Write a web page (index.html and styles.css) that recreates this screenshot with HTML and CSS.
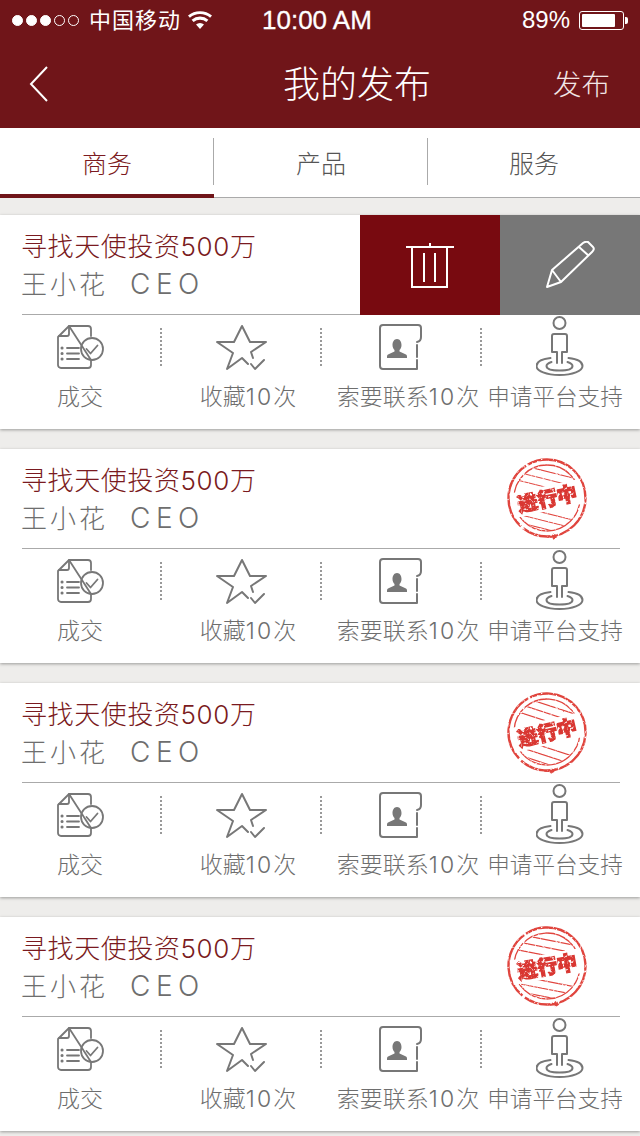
FILE: index.html
```html
<!DOCTYPE html>
<html lang="zh">
<head>
<meta charset="utf-8">
<title>我的发布</title>
<link rel="stylesheet" href="styles.css">
</head>
<body>
<svg class="defs" width="0" height="0">
  <defs>
    <filter id="rough" x="-10%" y="-10%" width="120%" height="120%">
      <feTurbulence type="fractalNoise" baseFrequency="0.4" numOctaves="2" seed="4" result="n"/>
      <feDisplacementMap in="SourceGraphic" in2="n" scale="1.500" result="d"/>
      <feColorMatrix in="n" type="matrix" values="0 0 0 0 0  0 0 0 0 0  0 0 0 0 0  0 0 0 -5 3.900" result="m"/>
      <feComposite in="d" in2="m" operator="in"/>
    </filter>
    <clipPath id="stampClip"><circle cx="42" cy="42" r="32"/></clipPath>
    <g id="stampBase">
      <circle cx="42" cy="42" r="38.500" fill="none" stroke-width="2.400" stroke-dasharray="86 3 70 2 82 4"/>
      <circle cx="42" cy="42" r="33" fill="none" stroke-width="1.300"/>
      <g clip-path="url(#stampClip)" stroke-width="1.200">
        <path d="M0 5 L84 26 M0 13 L84 34 M0 21 L84 42 M0 47 L84 68 M0 55 L84 76 M0 63 L84 84 M0 71 L84 92"/>
      </g>
      <path d="M42 81 h9 m-3 -3 l3 3 l-3 2" fill="none" stroke-width="1.600"/>
    </g>
    <g id="iDeal" fill="none" stroke="#777" stroke-width="1.800" stroke-linecap="round" stroke-linejoin="round">
      <path d="M13 11 H32 a3 3 0 0 1 3 3 V21 M35 45 V50 a3 3 0 0 1 -3 3 H5 a3 3 0 0 1 -3 -3 V22 L13 11 Z"/>
      <path d="M13 11 V19 a2 2 0 0 1 -2 2 H3"/>
      <circle cx="36" cy="34" r="11"/>
      <path d="M30.500 34 l4 4.500 l7 -8"/>
      <path d="M11 33 H23 M11 38.500 H23 M11 44 H23"/>
      <path d="M6 33 h.1 M6 38.500 h.1 M6 44 h.1" stroke-width="3"/>
    </g>
    <path id="iStar" d="M32 49 L26 43 L11 54 L17 38 L1 27 L18 27 L26 11 L34 27 L50 27 L35 37 L37 43 M35 49 L39 54 L48 45" fill="none" stroke="#777" stroke-width="2" stroke-linecap="round" stroke-linejoin="round"/>
    <g id="iContact">
      <path d="M38 54 H4 a3 3 0 0 1 -3 -3 V13 a3 3 0 0 1 3 -3 H39 a3 3 0 0 1 3 3 V22 a5 5 0 0 1 -4 5 M38 30 V42 M38 45 V54" fill="none" stroke="#777" stroke-width="2" stroke-linecap="round"/>
      <path d="M18 24 c3 0 4.500 3 4.500 6 c0 2.500 -1 4 -2 5 v1.500 l6.500 3 q1 .5 1 2 v1.500 H8 v-1.500 q0 -1.500 1 -2 l6.500 -3 v-1.500 c-1 -1 -2 -2.500 -2 -5 c0 -3 1.500 -6 4.500 -6 Z" fill="#777"/>
    </g>
    <g id="iSupport" fill="none" stroke="#777" stroke-width="2" stroke-linecap="round" stroke-linejoin="round">
      <circle cx="25" cy="8" r="6"/>
      <path d="M22.500 48 V37 H17.500 V21 a2 2 0 0 1 2 -2 H30.500 a2 2 0 0 1 2 2 V37 H27.500 V48"/>
      <path d="M16 43 C7 44 2 47 2 51 C2 56 12 60 25 60 C38 60 48 56 48 51 C48 47 43 44 34 43"/>
      <path d="M17 47 C14 48 12 49.500 12 51 C12 54 18 55.500 25 55.500 C32 55.500 38 54 38 51 C38 49.500 36 48 33 47"/>
    </g>
  </defs>
</svg>

<header class="top">
  <div class="status">
    <div class="signal"><i class="on"></i><i class="on"></i><i class="on"></i><i></i><i></i></div>
    <span class="carrier">中国移动</span>
    <svg class="wifi" viewBox="0 0 24 18" width="24" height="18"><path d="M12 18 L8 13.500 a6 6 0 0 1 8 0 Z M5.600 11 L3.600 8.700 a13 13 0 0 1 16.800 0 L18.400 11 a10 10 0 0 0 -12.800 0 Z M1.900 6.700 L0 4.600 a18.500 18.500 0 0 1 24 0 L22.100 6.700 a15.600 15.600 0 0 0 -20.200 0 Z"/></svg>
    <span class="time">10:00 AM</span>
    <span class="pct">89%</span>
    <div class="battery"><b></b></div>
    <div class="nub"></div>
  </div>
  <nav class="nav">
    <svg class="back" viewBox="0 0 20 36" width="20" height="36"><path d="M18 1 L2 18 L18 35" fill="none" stroke="#fff" stroke-width="2"/></svg>
    <h1 class="page-title">我的发布</h1>
    <span class="publish">发布</span>
  </nav>
</header>

<div class="tabs">
  <div class="tab active">商务</div>
  <div class="tab">产品</div>
  <div class="tab">服务</div>
</div>

<main class="list">
  <article class="card">
    <div class="head">
      <div class="title">寻找天使投资500万</div>
      <div class="person"><span>王小花</span><span class="role">CEO</span></div>
    </div>
    <div class="actions">
      <div class="act"><svg class="ic" viewBox="0 0 48 61" width="48" height="61"><use href="#iDeal"/></svg><span class="lbl">成交</span></div>
      <i class="sep"></i>
      <div class="act"><svg class="ic" viewBox="0 0 51 61" width="51" height="61"><use href="#iStar"/></svg><span class="lbl shift-r">收藏<span class="num">10</span>次</span></div>
      <i class="sep"></i>
      <div class="act"><svg class="ic" viewBox="0 0 44 61" width="44" height="61"><use href="#iContact"/></svg><span class="lbl shift-r">索要联系<span class="num">10</span>次</span></div>
      <i class="sep"></i>
      <div class="act"><svg class="ic" viewBox="1.500 0 50 61" width="50" height="61"><use href="#iSupport"/></svg><span class="lbl shift-l">申请平台支持</span></div>
    </div>
    <div class="swipe">
      <button class="sw del" type="button"><svg viewBox="0 0 50 48" width="50" height="48"><path d="M1 6 H49 M25 2 V6 M7 6 V46 H42 V6 M19 12 V41 M30 12 V41" fill="none" stroke="#fff" stroke-width="2"/></svg></button>
      <button class="sw edit" type="button"><svg viewBox="0 0 50 48" width="50" height="48"><path d="M2 46 L7 29 L38 2 Q41 0 43 1 L48 6 Q50 8 47 11 L16 41 Z M7 29 L16 41 M34 6 L44 15" fill="none" stroke="#fff" stroke-width="2" stroke-linejoin="round"/></svg></button>
    </div>
  </article>

  <article class="card">
    <div class="head">
      <div class="title">寻找天使投资500万</div>
      <div class="person"><span>王小花</span><span class="role">CEO</span></div>
    </div>
    <div class="actions">
      <div class="act"><svg class="ic" viewBox="0 0 48 61" width="48" height="61"><use href="#iDeal"/></svg><span class="lbl">成交</span></div>
      <i class="sep"></i>
      <div class="act"><svg class="ic" viewBox="0 0 51 61" width="51" height="61"><use href="#iStar"/></svg><span class="lbl shift-r">收藏<span class="num">10</span>次</span></div>
      <i class="sep"></i>
      <div class="act"><svg class="ic" viewBox="0 0 44 61" width="44" height="61"><use href="#iContact"/></svg><span class="lbl shift-r">索要联系<span class="num">10</span>次</span></div>
      <i class="sep"></i>
      <div class="act"><svg class="ic" viewBox="1.500 0 50 61" width="50" height="61"><use href="#iSupport"/></svg><span class="lbl shift-l">申请平台支持</span></div>
    </div>
    <svg class="stamp" viewBox="0 0 84 84" width="84" height="84"><g class="stamp-ink" filter="url(#rough)"><use href="#stampBase"/><g transform="rotate(-12 42 42)"><rect x="6" y="30" width="72" height="25" class="stamp-band"/><text x="42" y="50" text-anchor="middle" class="stamp-text">进行中</text></g></g></svg>
  </article>

  <article class="card">
    <div class="head">
      <div class="title">寻找天使投资500万</div>
      <div class="person"><span>王小花</span><span class="role">CEO</span></div>
    </div>
    <div class="actions">
      <div class="act"><svg class="ic" viewBox="0 0 48 61" width="48" height="61"><use href="#iDeal"/></svg><span class="lbl">成交</span></div>
      <i class="sep"></i>
      <div class="act"><svg class="ic" viewBox="0 0 51 61" width="51" height="61"><use href="#iStar"/></svg><span class="lbl shift-r">收藏<span class="num">10</span>次</span></div>
      <i class="sep"></i>
      <div class="act"><svg class="ic" viewBox="0 0 44 61" width="44" height="61"><use href="#iContact"/></svg><span class="lbl shift-r">索要联系<span class="num">10</span>次</span></div>
      <i class="sep"></i>
      <div class="act"><svg class="ic" viewBox="1.500 0 50 61" width="50" height="61"><use href="#iSupport"/></svg><span class="lbl shift-l">申请平台支持</span></div>
    </div>
    <svg class="stamp" viewBox="0 0 84 84" width="84" height="84"><g class="stamp-ink" filter="url(#rough)"><use href="#stampBase" transform="rotate(4 42 42)"/><g transform="rotate(-13 42 42)"><rect x="6" y="30" width="72" height="25" class="stamp-band"/><text x="42" y="50" text-anchor="middle" class="stamp-text">进行中</text></g></g></svg>
  </article>

  <article class="card">
    <div class="head">
      <div class="title">寻找天使投资500万</div>
      <div class="person"><span>王小花</span><span class="role">CEO</span></div>
    </div>
    <div class="actions">
      <div class="act"><svg class="ic" viewBox="0 0 48 61" width="48" height="61"><use href="#iDeal"/></svg><span class="lbl">成交</span></div>
      <i class="sep"></i>
      <div class="act"><svg class="ic" viewBox="0 0 51 61" width="51" height="61"><use href="#iStar"/></svg><span class="lbl shift-r">收藏<span class="num">10</span>次</span></div>
      <i class="sep"></i>
      <div class="act"><svg class="ic" viewBox="0 0 44 61" width="44" height="61"><use href="#iContact"/></svg><span class="lbl shift-r">索要联系<span class="num">10</span>次</span></div>
      <i class="sep"></i>
      <div class="act"><svg class="ic" viewBox="1.500 0 50 61" width="50" height="61"><use href="#iSupport"/></svg><span class="lbl shift-l">申请平台支持</span></div>
    </div>
    <svg class="stamp" viewBox="0 0 84 84" width="84" height="84"><g class="stamp-ink" filter="url(#rough)"><use href="#stampBase" transform="rotate(-3 42 42)"/><g transform="rotate(-10 42 42)"><rect x="6" y="30" width="72" height="25" class="stamp-band"/><text x="42" y="50" text-anchor="middle" class="stamp-text">进行中</text></g></g></svg>
  </article>
</main>
</body>
</html>
```
FILE: styles.css
```css
* { box-sizing: border-box; }
html, body { margin: 0; padding: 0; }
body {
  width: 640px;
  height: 1136px;
  overflow: hidden;
  background: #eeedeb;
  font-family: "Inter", "Noto Sans CJK SC", sans-serif;
  font-weight: 300;
  color: #666;
}
.defs { display: block; height: 0; }

.top { height: 128px; background: #701519; color: #fff; }
.status {
  display: flex;
  align-items: center;
  height: 40px;
  padding-left: 12px;
}
.signal { display: flex; gap: 3px; width: 77px; }
.signal i {
  width: 11px;
  height: 11px;
  border: 1px solid #fff;
  border-radius: 50%;
}
.signal i.on { background: #fff; }
.carrier { font-size: 22px; letter-spacing: 1px; line-height: 40px; font-weight: 400; }
.wifi { margin-left: 7px; fill: #fff; }
.time {
  margin-left: 50px;
  font-family: "Liberation Sans", sans-serif;
  font-size: 26px;
  font-weight: 400;
  -webkit-text-stroke: .3px #fff;
}
.pct {
  margin-left: auto;
  font-family: "Liberation Sans", sans-serif;
  font-size: 24px;
  font-weight: 400;
}
.battery {
  width: 45px;
  height: 19px;
  margin-left: 9px;
  padding: 2px 8px 2px 2px;
  border: 1px solid #fff;
  border-radius: 3px;
}
.battery b { display: block; height: 100%; background: #fff; border-radius: 1px; }
.nub {
  width: 3px;
  height: 7px;
  margin-left: 1px;
  margin-right: 12px;
  background: #fff;
  border-radius: 0 2px 2px 0;
}

.nav {
  display: flex;
  align-items: center;
  height: 88px;
  padding: 0 30px 4px 29px;
}
.back { flex: none; margin-top: 4px; }
.page-title {
  flex: 1;
  margin: 0;
  padding-left: 112px;
  text-align: center;
  font-size: 37px;
  font-weight: 300;
  color: #fff;
}
.publish { font-size: 28.500px; color: #f2e6e6; }

.tabs {
  display: flex;
  height: 70px;
  background: #fff;
  border-bottom: 1px solid #aaa;
}
.tab {
  position: relative;
  flex: 0 0 214px;
  height: 70px;
  line-height: 72px;
  text-align: center;
  font-size: 25px;
  color: #555;
}
.tab:last-child { flex: 1; }
.tab:not(:last-child)::after {
  content: "";
  position: absolute;
  top: 10px;
  right: 0;
  width: 1px;
  height: 47px;
  background: #aaa;
}
.tab.active { color: #7c1a20; border-bottom: 4px solid #701519; line-height: 72px; }

.list { padding-top: 17px; display: flex; flex-direction: column; gap: 20px; }
.card {
  position: relative;
  height: 214px;
  background: #fff;
  box-shadow: 0 1px 3px rgba(0, 0, 0, .35);
}
.head {
  height: 100px;
  margin: 0 20px 0 22px;
  padding-top: 14px;
  border-bottom: 1px solid #aaa;
}
.title {
  margin-left: -1px;
  font-size: 26px;
  line-height: 36px;
  color: #7a1a20;
  letter-spacing: .6px;
}
.person {
  display: flex;
  align-items: baseline;
  gap: 22px;
  margin-left: -1px;
  margin-top: 1px;
  font-size: 26px;
  line-height: 36px;
  letter-spacing: 3px;
  color: #6e6e6e;
}
.role { font-size: 28px; letter-spacing: 5.500px; }

.actions { display: flex; align-items: flex-start; }
.act {
  display: flex;
  flex-direction: column;
  align-items: center;
  flex: 0 0 160px;
}
.act:nth-child(3) { flex-basis: 158px; }
.act:nth-child(5) { flex-basis: 158px; }
.act:nth-child(7) { flex-basis: 158px; }
.ic { display: block; flex: none; }
.lbl {
  margin-top: 6px;
  font-size: 23px;
  line-height: 30px;
  white-space: nowrap;
  color: #6e6e6e;
}
.num { letter-spacing: 2px; }
.shift-r { margin-left: 14px; }
.shift-l { margin-right: 12px; font-size: 22.600px; }
.sep {
  flex: 0 0 2px;
  height: 38px;
  margin-top: 13px;
  border-left: 2px dotted #999;
}

.swipe {
  position: absolute;
  top: 0;
  right: 0;
  display: flex;
  height: 100px;
}
.sw {
  display: flex;
  align-items: center;
  justify-content: center;
  width: 140px;
  height: 100px;
  padding: 0;
  border: 0;
}
.del { background: #780a10; }
.edit { background: #777; }

.stamp { position: absolute; top: 7px; left: 505px; }
.stamp-ink { stroke: #e0443e; fill: none; }
.stamp-band { fill: #fff; stroke: none; }
.stamp-text {
  fill: #d93732;
  stroke: #d93732;
  stroke-width: 1.400px;
  font-family: "Noto Sans CJK SC", sans-serif;
  font-size: 20px;
  font-weight: 900;
}
```
